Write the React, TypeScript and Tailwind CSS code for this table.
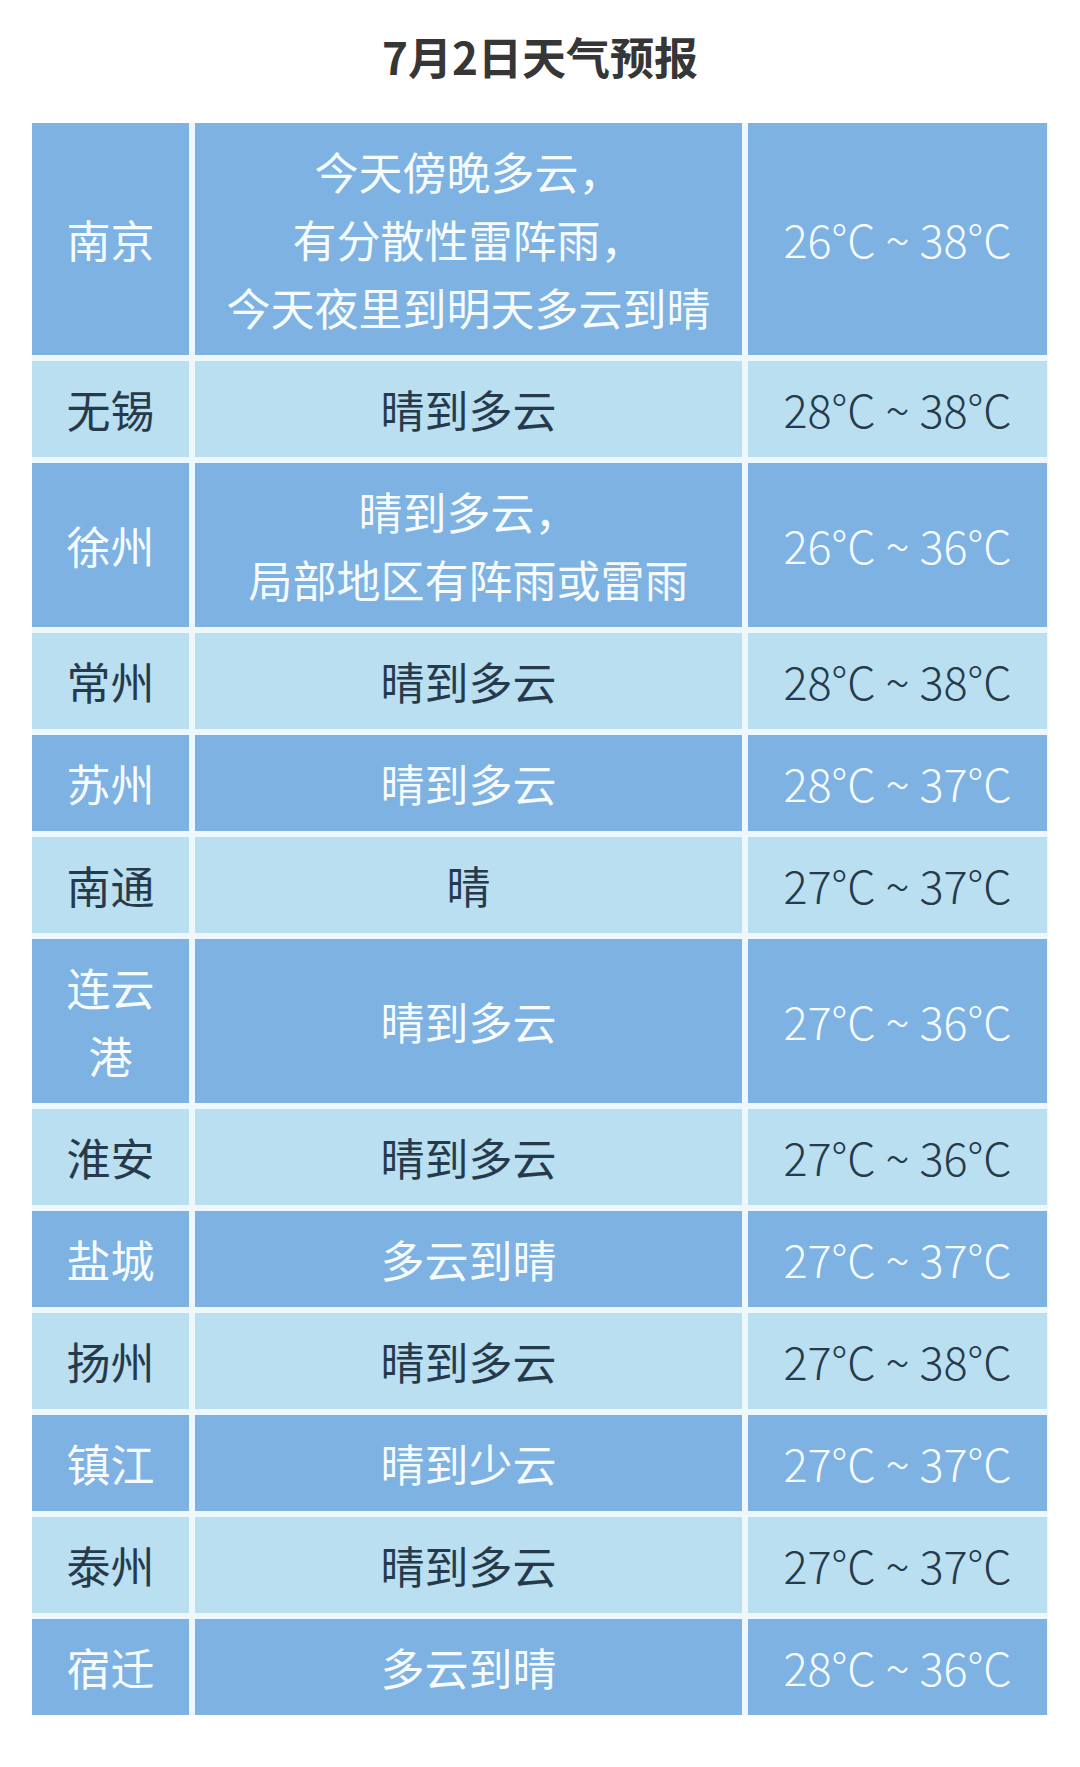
import React from "react";

type Row = {
  city: string;
  weather: string[];
  temp: string;
  dark: boolean;
};

const rows: Row[] = [
  { city: "南京", weather: ["今天傍晚多云，", "有分散性雷阵雨，", "今天夜里到明天多云到晴"], temp: "26°C ~ 38°C", dark: true },
  { city: "无锡", weather: ["晴到多云"], temp: "28°C ~ 38°C", dark: false },
  { city: "徐州", weather: ["晴到多云，", "局部地区有阵雨或雷雨"], temp: "26°C ~ 36°C", dark: true },
  { city: "常州", weather: ["晴到多云"], temp: "28°C ~ 38°C", dark: false },
  { city: "苏州", weather: ["晴到多云"], temp: "28°C ~ 37°C", dark: true },
  { city: "南通", weather: ["晴"], temp: "27°C ~ 37°C", dark: false },
  { city: "连云港", weather: ["晴到多云"], temp: "27°C ~ 36°C", dark: true },
  { city: "淮安", weather: ["晴到多云"], temp: "27°C ~ 36°C", dark: false },
  { city: "盐城", weather: ["多云到晴"], temp: "27°C ~ 37°C", dark: true },
  { city: "扬州", weather: ["晴到多云"], temp: "27°C ~ 38°C", dark: false },
  { city: "镇江", weather: ["晴到少云"], temp: "27°C ~ 37°C", dark: true },
  { city: "泰州", weather: ["晴到多云"], temp: "27°C ~ 37°C", dark: false },
  { city: "宿迁", weather: ["多云到晴"], temp: "28°C ~ 36°C", dark: true },
];

const App = () => {
  return (
    <div
      className="bg-white w-[1080px] min-h-[1767px]"
      style={{ fontFamily: '"Noto Sans CJK SC", "Noto Sans", sans-serif' }}
    >
      <h1 className="pt-[26px] text-center text-[44px] leading-[60px] font-bold text-[#363636]">
        7月2日天气预报
      </h1>

      <div className="mt-[37px] mx-[32px] flex flex-col gap-[6px] bg-[#eef7fb]">
        {rows.map((row, index) => {
          const cell = row.dark
            ? "bg-[#7db2e3] text-[#f5fbff]"
            : "bg-[#b9dff0] text-[#263a4c]";
          return (
            <div key={index} className="grid grid-cols-[157px_547px_299px] gap-[6px] text-[44px] leading-[68px]">
              <div className={`${cell} flex items-center justify-center text-center px-[14px] py-[14px]`}>
                {row.city}
              </div>
              <div className={`${cell} flex flex-col items-center justify-center text-center py-[14px]`}>
                {row.weather.map((line, i) => (
                  <div key={i}>{line}</div>
                ))}
              </div>
              <div className={`${cell} flex items-center justify-center py-[14px] text-[45px] font-light`}>
                {row.temp}
              </div>
            </div>
          );
        })}
      </div>
    </div>
  );
};

export default App;
